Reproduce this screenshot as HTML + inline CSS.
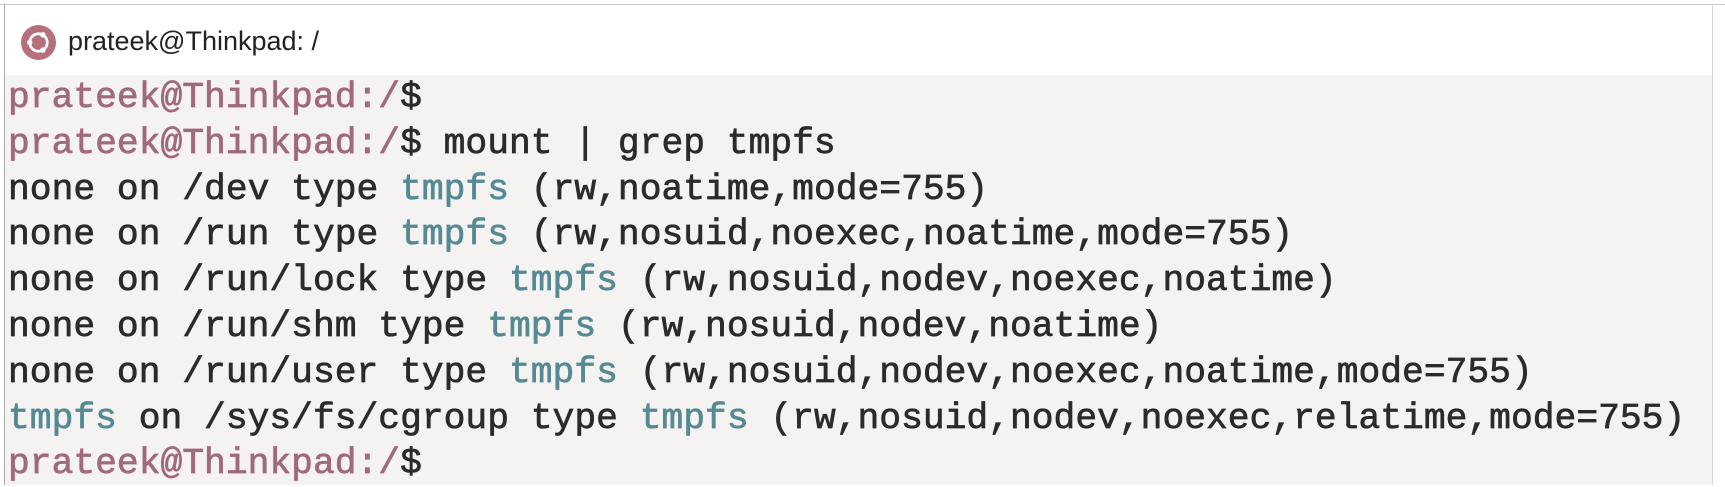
<!DOCTYPE html>
<html><head><meta charset="utf-8"><style>
html,body{margin:0;padding:0;width:1725px;height:485px;overflow:hidden;background:#fff}
.top{position:absolute;left:0;top:0;width:1725px;height:4px;border-bottom:1px solid #c8c8c8}
.lb{position:absolute;left:4px;top:4px;width:1px;height:481px;background:#a8a8a8}
.rb{position:absolute;left:1712px;top:4px;width:1px;height:481px;background:#d8d8d8}
.icon{position:absolute;left:21px;top:25px;width:35px;height:35px;border-radius:50%;background:#b5707c}
.title{position:absolute;left:68px;top:26px;font:27px "Liberation Sans",sans-serif;color:#222}
.term{position:absolute;left:5px;top:75px;width:1707px;height:410px;background:#f4f3f1}
pre{position:absolute;left:8px;top:75px;margin:0;font:36.3px/45.8px "Liberation Mono",monospace;color:#2c2a2b;-webkit-text-stroke:0.7px currentColor}
.p{color:#a06a7a}.t{color:#558a94}
</style></head><body>
<div class="top"></div><div class="lb"></div><div class="rb"></div>
<div class="icon"><svg width="35" height="35" viewBox="0 0 32 32"><circle cx="16" cy="16" r="8" fill="none" stroke="#fff" stroke-width="2.5"/><circle cx="8" cy="16" r="2.5" fill="#fff"/><circle cx="20" cy="9" r="2.5" fill="#fff"/><circle cx="20" cy="23" r="2.5" fill="#fff"/></svg></div>
<div class="title">prateek@Thinkpad: /</div>
<div class="term"></div>
<pre><span class="p">prateek@Thinkpad:/</span>$
<span class="p">prateek@Thinkpad:/</span>$ mount | grep tmpfs
none on /dev type <span class="t">tmpfs</span> (rw,noatime,mode=755)
none on /run type <span class="t">tmpfs</span> (rw,nosuid,noexec,noatime,mode=755)
none on /run/lock type <span class="t">tmpfs</span> (rw,nosuid,nodev,noexec,noatime)
none on /run/shm type <span class="t">tmpfs</span> (rw,nosuid,nodev,noatime)
none on /run/user type <span class="t">tmpfs</span> (rw,nosuid,nodev,noexec,noatime,mode=755)
<span class="t">tmpfs</span> on /sys/fs/cgroup type <span class="t">tmpfs</span> (rw,nosuid,nodev,noexec,relatime,mode=755)
<span class="p">prateek@Thinkpad:/</span>$</pre>
</body></html>
